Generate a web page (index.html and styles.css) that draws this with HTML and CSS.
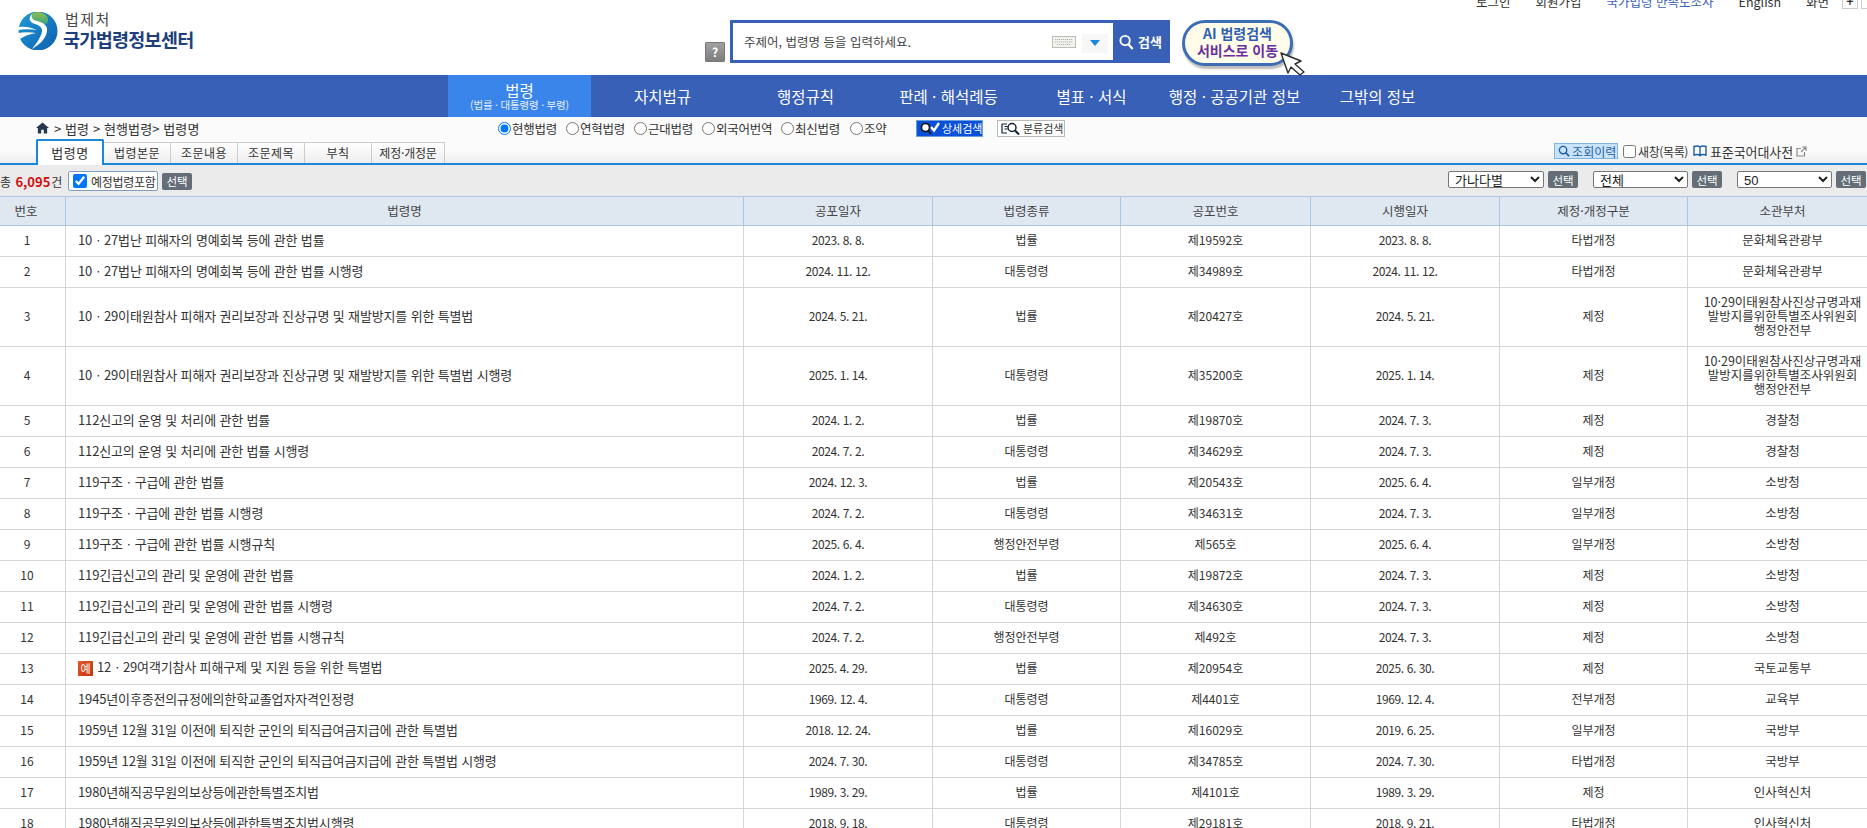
FILE: index.html
```html
<!DOCTYPE html>
<html lang="ko">
<head>
<meta charset="utf-8">
<title>국가법령정보센터</title>
<link rel="stylesheet" href="styles.css">
</head>
<body>
<header class="top">
  <div class="util">
    <a>로그인</a><a>회원가입</a><a class="util-blue">국가법령 만족도조사</a><a>English</a><a>화면</a>
    <span class="zoom-btn">+</span><span class="zoom-btn">-</span>
  </div>
  <div class="brand-row">
    <div class="logo">
      <svg class="logo-mark" viewBox="0 0 40 38" width="40" height="38">
        <defs>
          <linearGradient id="lg1" x1="0" y1="0" x2="1" y2="1"><stop offset="0" stop-color="#1f9ad6"/><stop offset="1" stop-color="#0e5fae"/></linearGradient>
          <linearGradient id="lg2" x1="0" y1="0" x2="0" y2="1"><stop offset="0" stop-color="#8cc04a"/><stop offset="1" stop-color="#2f9f8c"/></linearGradient>
        </defs>
        <circle cx="20" cy="19" r="19.500" fill="url(#lg1)"/>
        <path d="M15 1C21-1 30 1 30 8 30 14 23 12 21 14 17 12 12 9 12 6 12 4 13 2 15 1Z" fill="url(#lg2)"/>
        <path d="M14 2C10 6 11 10 17 12 24 14 26 18 22 25 20 30 16 34 14 37 20 33 28 28 29 19 30 13 24 10 19 9 14 8 13 5 14 2Z" fill="#fff"/>
        <path d="M0 15C6 14 13 15 19 18 13 17 6 17 0 18ZM0 21C6 20 12 20 18 21 12 22 6 24 2 27Z" fill="#fff"/>
      </svg>
      <div class="logo-text">
        <span class="logo-sub">법제처</span>
        <span class="logo-main">국가법령정보센터</span>
      </div>
    </div>
    <span class="help">?</span>
    <form class="search">
      <span class="search-input">
        <span class="placeholder">주제어, 법령명 등을 입력하세요.</span>
        <svg class="kbd" viewBox="0 0 24 12" width="24" height="12"><rect x=".5" y=".5" width="23" height="11" fill="#f2f2ee" stroke="#bdbdb5"/><path d="M3 3.500h18M3 6h18M5 8.500h14" stroke="#b2b2aa" stroke-dasharray="1.200 .8"/></svg>
        <span class="drop"><i class="tri"></i></span>
      </span>
      <span class="search-btn">
        <svg viewBox="0 0 16 16" width="15" height="16"><circle cx="6.500" cy="6.500" r="5" fill="none" stroke="#fff" stroke-width="2"/><path d="M10 10.500l4.500 5" stroke="#fff" stroke-width="2.400"/></svg>
        <b>검색</b>
      </span>
    </form>
    <div class="ai">
      <span class="ai-1">AI 법령검색</span>
      <span class="ai-2">서비스로 이동</span>
      <svg class="ai-cursor" viewBox="0 0 26 24" width="26" height="24"><path d="M1 1L21 9 15 12 24 20 20 23 11 15 8 21Z" fill="#fff" stroke="#2d2d2d" stroke-width="1.400" stroke-linejoin="round"/></svg>
    </div>
  </div>
</header>

<nav class="gnb">
  <a class="gnb-item gnb-on"><span>법령</span><small>(법률 · 대통령령 · 부령)</small></a>
  <a class="gnb-item">자치법규</a>
  <a class="gnb-item">행정규칙</a>
  <a class="gnb-item">판례 · 해석례등</a>
  <a class="gnb-item">별표 · 서식</a>
  <a class="gnb-item">행정 · 공공기관 정보</a>
  <a class="gnb-item">그밖의 정보</a>
</nav>

<section class="sub">
  <div class="sub-row1">
    <div class="crumb">
      <svg viewBox="0 0 14 12" width="13" height="12"><path d="M7 0L0 6h2v6h3.600V8h2.800v4H12V6h2z" fill="#26384f"/></svg>
      <span>&gt; 법령 &gt; 현행법령&gt; 법령명</span>
    </div>
    <div class="radios">
      <label class="r1"><input type="radio" name="k" checked>현행법령</label>
      <label class="r2"><input type="radio" name="k">연혁법령</label>
      <label class="r3"><input type="radio" name="k">근대법령</label>
      <label class="r4"><input type="radio" name="k">외국어번역</label>
      <label class="r5"><input type="radio" name="k">최신법령</label>
      <label class="r6"><input type="radio" name="k">조약</label>
    </div>
    <a class="btn-detail">
      <svg viewBox="0 0 20 13" width="20" height="13"><circle cx="5.500" cy="5.500" r="4" fill="#fff" stroke="#111" stroke-width="1.600"/><path d="M8.500 9l2.500 3" stroke="#111" stroke-width="1.600"/><path d="M11 5l3 3.500L19 1" fill="none" stroke="#fff" stroke-width="2.400"/></svg>
      <span>상세검색</span>
    </a>
    <a class="btn-class">
      <svg viewBox="0 0 20 13" width="20" height="13"><path d="M1 2v9h5M3.500 4.500h3M3.500 7h3M1 2h5" fill="none" stroke="#123" stroke-width="1.200"/><circle cx="11" cy="5.500" r="4" fill="#fff" stroke="#123" stroke-width="1.500"/><path d="M14 8.500l4 4" stroke="#123" stroke-width="2"/></svg>
      <span>분류검색</span>
    </a>
  </div>
  <div class="sub-row2">
    <div class="tabs">
      <a class="tab tab-on">법령명</a>
      <a class="tab">법령본문</a>
      <a class="tab">조문내용</a>
      <a class="tab">조문제목</a>
      <a class="tab">부칙</a>
      <a class="tab tab-wide">제정·개정문</a>
    </div>
    <div class="tools">
      <a class="btn-hist">
        <svg viewBox="0 0 13 13" width="12" height="12"><circle cx="5.500" cy="5.500" r="4" fill="none" stroke="#1d5f9f" stroke-width="1.500"/><path d="M8.500 8.500l3.500 3.500" stroke="#1d5f9f" stroke-width="1.800"/></svg>
        <span>조회이력</span>
      </a>
      <label class="newwin"><input type="checkbox">새창(목록)</label>
      <a class="dict">
        <svg viewBox="0 0 14 12" width="14" height="12"><path d="M7 2C5.500.8 3 .8 1 1.500V10c2-.6 4.500-.6 6 .6 1.500-1.200 4-1.200 6-.6V1.500C11 .8 8.500.8 7 2zM7 2v8.600" fill="none" stroke="#1e5ea8" stroke-width="1.400"/></svg>
        <span>표준국어대사전</span>
        <svg viewBox="0 0 11 11" width="11" height="11"><path d="M8.500 6v4H1V2.500h4M6 1h4v4M10 1L5 6" fill="none" stroke="#8a8a8a" stroke-width="1.200"/></svg>
      </a>
    </div>
  </div>
</section>

<section class="filter">
  <span class="total">총 <b>6,095</b>건</span>
  <label class="incl"><input type="checkbox" checked>예정법령포함</label>
  <a class="pick">선택</a>
  <span class="filter-right">
    <select class="sel"><option>가나다별</option></select><a class="pick">선택</a>
    <select class="sel sel-gap"><option>전체</option></select><a class="pick">선택</a>
    <select class="sel sel-gap"><option>50</option></select><a class="pick">선택</a>
  </span>
</section>

<table class="list">
  <colgroup><col class="c-no"><col class="c-name"><col class="c-a"><col class="c-b"><col class="c-c"><col class="c-d"><col class="c-e"><col class="c-f"></colgroup>
  <thead>
    <tr><th>번호</th><th>법령명</th><th>공포일자</th><th>법령종류</th><th>공포번호</th><th>시행일자</th><th>제정·개정구분</th><th>소관부처</th></tr>
  </thead>
  <tbody>
    <tr><td>1</td><td class="name">10ㆍ27법난 피해자의 명예회복 등에 관한 법률</td><td class="dt">2023. 8. 8.</td><td>법률</td><td>제19592호</td><td class="dt">2023. 8. 8.</td><td>타법개정</td><td class="org">문화체육관광부</td></tr>
    <tr><td>2</td><td class="name">10ㆍ27법난 피해자의 명예회복 등에 관한 법률 시행령</td><td class="dt">2024. 11. 12.</td><td>대통령령</td><td>제34989호</td><td class="dt">2024. 11. 12.</td><td>타법개정</td><td class="org">문화체육관광부</td></tr>
    <tr class="tall"><td>3</td><td class="name">10ㆍ29이태원참사 피해자 권리보장과 진상규명 및 재발방지를 위한 특별법</td><td class="dt">2024. 5. 21.</td><td>법률</td><td>제20427호</td><td class="dt">2024. 5. 21.</td><td>제정</td><td class="org">10·29이태원참사진상규명과재<br>발방지를위한특별조사위원회<br>행정안전부</td></tr>
    <tr class="tall"><td>4</td><td class="name">10ㆍ29이태원참사 피해자 권리보장과 진상규명 및 재발방지를 위한 특별법 시행령</td><td class="dt">2025. 1. 14.</td><td>대통령령</td><td>제35200호</td><td class="dt">2025. 1. 14.</td><td>제정</td><td class="org">10·29이태원참사진상규명과재<br>발방지를위한특별조사위원회<br>행정안전부</td></tr>
    <tr><td>5</td><td class="name">112신고의 운영 및 처리에 관한 법률</td><td class="dt">2024. 1. 2.</td><td>법률</td><td>제19870호</td><td class="dt">2024. 7. 3.</td><td>제정</td><td class="org">경찰청</td></tr>
    <tr><td>6</td><td class="name">112신고의 운영 및 처리에 관한 법률 시행령</td><td class="dt">2024. 7. 2.</td><td>대통령령</td><td>제34629호</td><td class="dt">2024. 7. 3.</td><td>제정</td><td class="org">경찰청</td></tr>
    <tr><td>7</td><td class="name">119구조ㆍ구급에 관한 법률</td><td class="dt">2024. 12. 3.</td><td>법률</td><td>제20543호</td><td class="dt">2025. 6. 4.</td><td>일부개정</td><td class="org">소방청</td></tr>
    <tr><td>8</td><td class="name">119구조ㆍ구급에 관한 법률 시행령</td><td class="dt">2024. 7. 2.</td><td>대통령령</td><td>제34631호</td><td class="dt">2024. 7. 3.</td><td>일부개정</td><td class="org">소방청</td></tr>
    <tr><td>9</td><td class="name">119구조ㆍ구급에 관한 법률 시행규칙</td><td class="dt">2025. 6. 4.</td><td>행정안전부령</td><td>제565호</td><td class="dt">2025. 6. 4.</td><td>일부개정</td><td class="org">소방청</td></tr>
    <tr><td>10</td><td class="name">119긴급신고의 관리 및 운영에 관한 법률</td><td class="dt">2024. 1. 2.</td><td>법률</td><td>제19872호</td><td class="dt">2024. 7. 3.</td><td>제정</td><td class="org">소방청</td></tr>
    <tr><td>11</td><td class="name">119긴급신고의 관리 및 운영에 관한 법률 시행령</td><td class="dt">2024. 7. 2.</td><td>대통령령</td><td>제34630호</td><td class="dt">2024. 7. 3.</td><td>제정</td><td class="org">소방청</td></tr>
    <tr><td>12</td><td class="name">119긴급신고의 관리 및 운영에 관한 법률 시행규칙</td><td class="dt">2024. 7. 2.</td><td>행정안전부령</td><td>제492호</td><td class="dt">2024. 7. 3.</td><td>제정</td><td class="org">소방청</td></tr>
    <tr><td>13</td><td class="name"><span class="ye">예</span>12ㆍ29여객기참사 피해구제 및 지원 등을 위한 특별법</td><td class="dt">2025. 4. 29.</td><td>법률</td><td>제20954호</td><td class="dt">2025. 6. 30.</td><td>제정</td><td class="org">국토교통부</td></tr>
    <tr><td>14</td><td class="name">1945년이후종전의규정에의한학교졸업자자격인정령</td><td class="dt">1969. 12. 4.</td><td>대통령령</td><td>제4401호</td><td class="dt">1969. 12. 4.</td><td>전부개정</td><td class="org">교육부</td></tr>
    <tr><td>15</td><td class="name">1959년 12월 31일 이전에 퇴직한 군인의 퇴직급여금지급에 관한 특별법</td><td class="dt">2018. 12. 24.</td><td>법률</td><td>제16029호</td><td class="dt">2019. 6. 25.</td><td>일부개정</td><td class="org">국방부</td></tr>
    <tr><td>16</td><td class="name">1959년 12월 31일 이전에 퇴직한 군인의 퇴직급여금지급에 관한 특별법 시행령</td><td class="dt">2024. 7. 30.</td><td>대통령령</td><td>제34785호</td><td class="dt">2024. 7. 30.</td><td>타법개정</td><td class="org">국방부</td></tr>
    <tr><td>17</td><td class="name">1980년해직공무원의보상등에관한특별조치법</td><td class="dt">1989. 3. 29.</td><td>법률</td><td>제4101호</td><td class="dt">1989. 3. 29.</td><td>제정</td><td class="org">인사혁신처</td></tr>
    <tr><td>18</td><td class="name">1980년해직공무원의보상등에관한특별조치법시행령</td><td class="dt">2018. 9. 18.</td><td>대통령령</td><td>제29181호</td><td class="dt">2018. 9. 21.</td><td>타법개정</td><td class="org">인사혁신처</td></tr>
  </tbody>
</table>
</body>
</html>
```
FILE: styles.css
```css
* { box-sizing: border-box; }
html, body { margin: 0; padding: 0; height: 828px; overflow: hidden; background: #fff; }
body { font-family: "Noto Sans CJK KR", "Noto Sans", sans-serif; font-size: 12px; color: #333; }
a { color: inherit; text-decoration: none; }
input { margin: 0; }

/* header */
.top { display: flow-root; height: 75px; }
.util { display: flex; align-items: center; height: 16px; margin-top: -7px; gap: 25px; padding-left: 1476px; font-size: 12.500px; color: #333; white-space: nowrap; }
.util-blue { color: #3a62b8; }
.zoom-btn { flex: none; width: 16px; height: 16px; border: 1px solid #ccc; text-align: center; line-height: 13px; font-weight: 700; margin-left: -22px; }
.zoom-btn:first-of-type { margin-left: -12px; }
.brand-row { display: flex; align-items: flex-start; height: 66px; padding-left: 18px; }
.logo { display: flex; width: 687px; height: 40px; margin-top: 3px; }
.logo-mark { flex: none; }
.logo-text { display: flex; flex-direction: column; margin-left: 5px; margin-top: -2px; }
.logo-sub { font-size: 15px; line-height: 18px; letter-spacing: 1.500px; margin-left: 2px; color: #4a4a4a; }
.logo-main { font-size: 18.500px; line-height: 23px; font-weight: 700; letter-spacing: -.7px; color: #1e3f7c; }
.help { width: 20px; height: 20px; margin-top: 33px; margin-right: 5px; background: linear-gradient(#a0a0a0, #7e7e7e); border: 1px solid #777; border-radius: 1px; color: #fff; font-weight: 700; font-size: 12px; line-height: 18px; text-align: center; }
.search { display: flex; width: 440px; height: 43px; margin-top: 11px; background: #3860b6; padding: 3px; }
.search-input { display: flex; align-items: center; width: 380px; height: 37px; background: #fff; padding-left: 11px; }
.placeholder { flex: 1; font-size: 12.500px; color: #444; }
.kbd { margin-right: 6px; }
.drop { display: flex; align-items: center; justify-content: center; width: 26px; height: 19px; background: #f7f7f7; margin-right: 5px; margin-top: 3px; }
.tri { width: 0; height: 0; border: 5px solid transparent; border-top: 6px solid #1b87d9; border-bottom: 0; }
.search-btn { display: flex; align-items: center; gap: 4px; padding-left: 6px; color: #fff; font-size: 13px; }
.ai { position: relative; display: flex; flex-direction: column; align-items: center; justify-content: center; width: 111px; height: 46px; margin-top: 11px; margin-left: 12px; padding-bottom: 2px; border: 3px solid #3d6db5; border-radius: 23px; background: #fffde9; box-shadow: 1px 3px 2px #bbb; font-weight: 700; font-size: 14px; line-height: 17px; white-space: nowrap; }
.ai-1 { color: #2f5fb5; }
.ai-2 { color: #6b2fa0; }
.ai-cursor { position: absolute; left: 95px; top: 29px; }

/* main nav */
.gnb { display: flex; height: 42px; padding-left: 448px; background: #3860b6; }
.gnb-item { display: flex; align-items: center; justify-content: center; width: 143px; color: #fff; font-size: 15.500px; }
.gnb-on { flex-direction: column; background: #3a85ea; line-height: 18px; }
.gnb-on small { font-size: 10.500px; line-height: 12px; letter-spacing: -.2px; color: #e6effb; }

/* sub nav */
.sub { height: 48px; border-bottom: 2px solid #1b87d9; background: linear-gradient(#fbfbfb 0, #fbfbfb 75%, #ececec 100%); }
.sub-row1 { display: flex; align-items: center; height: 22px; padding-left: 36px; }
.crumb { display: flex; align-items: center; gap: 5px; width: 462px; font-size: 13px; letter-spacing: .1px; }
.radios { display: flex; width: 418px; }
.radios label { display: flex; align-items: center; gap: 1px; font-size: 12.500px; letter-spacing: -.25px; }
.radios input { width: 13px; height: 13px; }
.r1, .r2, .r3 { width: 68px; }
.r4 { width: 79px; }
.r5 { width: 69px; }
.btn-detail, .btn-class { display: flex; align-items: center; gap: 2px; height: 17px; width: 67px; padding-left: 3px; font-size: 11px; white-space: nowrap; }
.btn-detail { background: #0a4fd8; border: 1px solid #6aa0d8; color: #fff; }
.btn-class { margin-left: 14px; width: 68px; background: #fff; border: 1px solid #bbb; }
.btn-detail svg, .btn-class svg { flex: none; }
.sub-row2 { display: flex; align-items: flex-end; justify-content: space-between; height: 24px; padding-left: 36px; padding-right: 60px; }
.tabs { display: flex; align-items: flex-end; }
.tab { display: flex; align-items: center; justify-content: center; width: 67px; height: 21px; padding-bottom: 2px; background: linear-gradient(#fff, #eee); border: 1px solid #ccc; border-left: 0; border-bottom: 0; letter-spacing: .5px; }
.tab-wide { width: 73px; letter-spacing: -.2px; }
.tab-on { width: 68px; height: 26px; margin-bottom: -2px; background: #fff; border: 2px solid #1b87d9; border-bottom: 0; border-radius: 2px 2px 0 0; font-size: 13px; }
.tools { display: flex; align-items: center; height: 21px; padding-bottom: 3px; white-space: nowrap; }
.btn-hist { display: flex; align-items: center; gap: 2px; width: 64px; height: 16px; padding-left: 3px; background: #c9e3fa; border: 1px solid #7db4e3; color: #1d5f9f; }
.btn-hist svg, .dict svg { flex: none; }
.newwin { display: flex; align-items: center; gap: 2px; margin-left: 5px; letter-spacing: -.4px; }
.newwin input { width: 13px; height: 13px; }
.dict { display: flex; align-items: center; gap: 3px; margin-left: 5px; font-size: 13px; letter-spacing: -.1px; }

/* filter bar */
.filter { display: flex; align-items: center; height: 31px; background: #ebebeb; padding-top: 1px; }
.total { width: 68px; white-space: nowrap; }
.total b { margin: 0 1px; font-size: 13px; color: #d01010; }
.incl { display: flex; align-items: center; gap: 4px; width: 90px; height: 20px; padding-left: 4px; background: #fff; border: 1px solid #7f9dbd; border-radius: 2px; letter-spacing: -.3px; white-space: nowrap; }
.incl input { width: 14px; height: 14px; }
.pick { display: flex; align-items: center; justify-content: center; width: 30px; height: 17px; margin-left: 4px; background: #646d78; border-radius: 2px; color: #fff; font-size: 11.500px; }
.filter-right { display: flex; align-items: center; align-self: flex-start; margin-top: 5px; margin-left: auto; padding-right: 1px; }
.sel { width: 96px; height: 17px; padding: 0 2px; font-family: "Liberation Sans", "Noto Sans CJK KR", sans-serif; font-size: 13px; color: #222; background: #fff; border: 1px solid #767676; border-radius: 2px; }
.sel-gap { width: 95px; margin-left: 15px; }

/* table */
.list { width: 1867px; table-layout: fixed; border-collapse: separate; border-spacing: 0; }
.c-no { width: 65px; }
.c-name { width: 678px; }
.c-a { width: 189px; }
.c-b { width: 188px; }
.c-c { width: 190px; }
.c-d { width: 189px; }
.c-e { width: 188px; }
.c-f { width: 180px; }
.list th { height: 30px; padding: 0 0 2px; font-weight: 400; font-size: 12.500px; color: #444; background: #dfe7f1; border-top: 1px solid #a9c7e4; border-bottom: 1px solid #a9c7e4; border-left: 1px solid #a9c7e4; }
.list th:first-child, .list td:first-child { border-left: 0; padding-right: 13px; }
.list th:last-child { padding-left: 10px; }
.list td { height: 31px; padding: 0 2px 2px; text-align: center; font-size: 12px; line-height: 14px; color: #333; border-bottom: 1px solid #d6d6d6; border-left: 1px solid #d6d6d6; }
.list .tall td { height: 59px; }
.list td.name { text-align: left; padding-left: 12px; font-size: 13px; letter-spacing: -.15px; }
.list td.dt { letter-spacing: -.4px; }
.list td.org { padding-left: 10px; padding-right: 0; font-size: 12.500px; white-space: nowrap; }
.ye { display: inline-block; width: 15px; height: 15px; margin-right: 4px; background: linear-gradient(135deg, #e4572a, #c5360a); color: #fff; text-align: center; font-size: 11px; line-height: 15px; vertical-align: -1px; }
```
